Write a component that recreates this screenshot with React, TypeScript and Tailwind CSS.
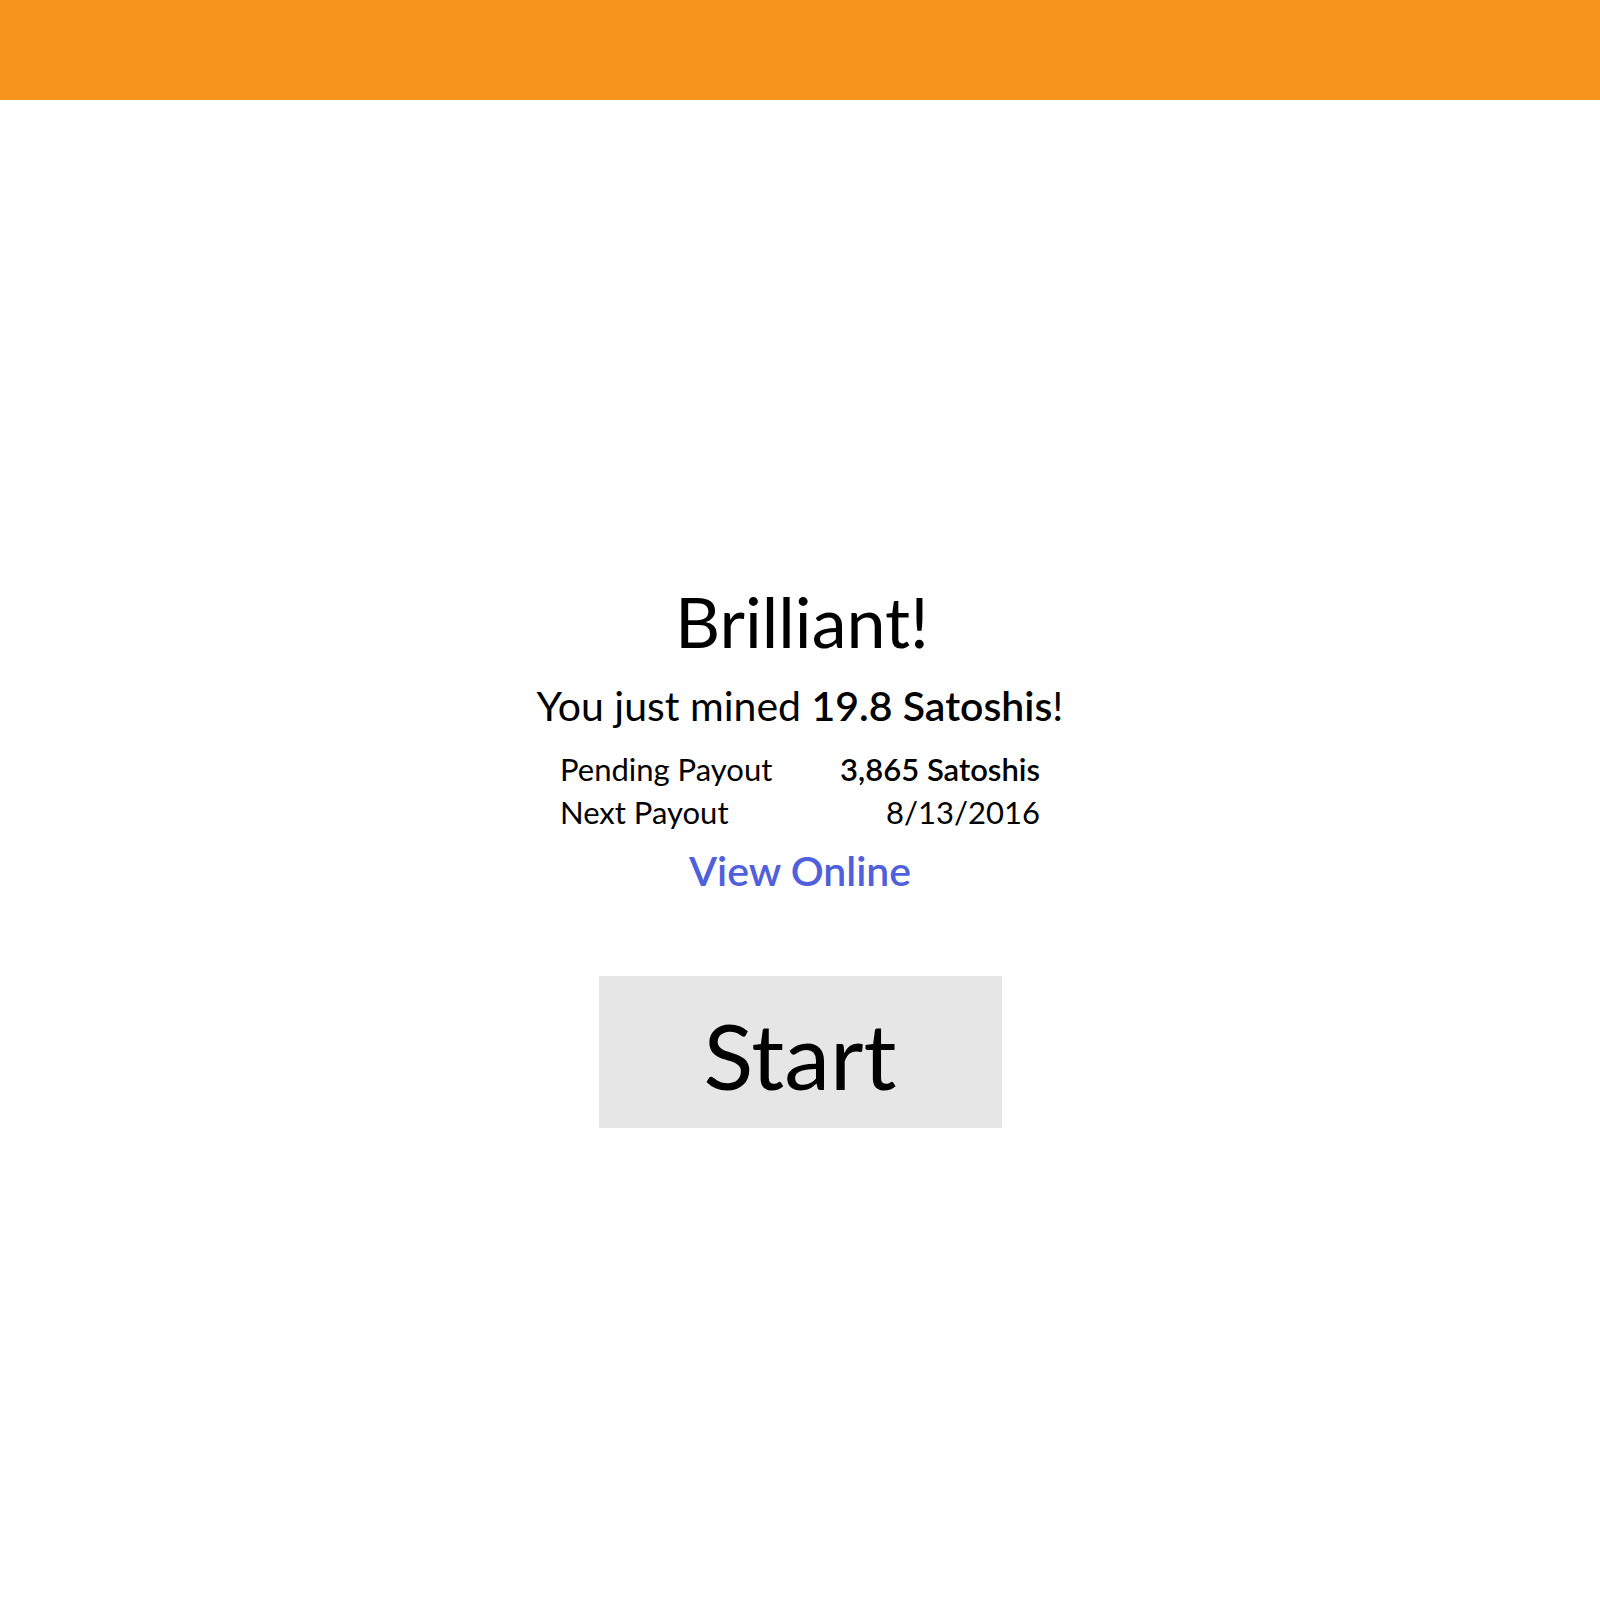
const FONT = "font-['Lato','Noto_Sans',sans-serif]";

export default function App() {
  return (
    <div className={`min-h-[1600px] w-full bg-white text-black ${FONT}`}>
      <header className="h-[100px] w-full bg-[#f7941e]" />

      <main className="flex flex-col items-center pt-[481px]">
        <h1 className="pl-[4px] text-[70px] leading-[80px] font-normal">Brilliant!</h1>

        <p className="mt-[20px] text-[41px] leading-[50px] whitespace-nowrap">
          You just mined <span className="font-semibold">19.8 Satoshis</span>!
        </p>

        <div className="mt-[17px] grid w-[480px] grid-cols-2 text-[31px] leading-[43px]">
          <span className="whitespace-nowrap">Pending Payout</span>
          <span className="whitespace-nowrap text-right font-semibold">
            3,865 Satoshis
          </span>
          <span className="whitespace-nowrap">Next Payout</span>
          <span className="whitespace-nowrap text-right">8/13/2016</span>
        </div>

        <a
          href="#"
          className="mt-[12px] text-[41px] leading-[50px] font-semibold text-[#5060dc]"
        >
          View Online
        </a>

        <button
          type="button"
          className="mt-[80px] flex h-[152px] w-[403px] items-center justify-center bg-[#e6e6e6] pt-[5px] text-[92px] leading-none"
        >
          Start
        </button>
      </main>
    </div>
  );
}
